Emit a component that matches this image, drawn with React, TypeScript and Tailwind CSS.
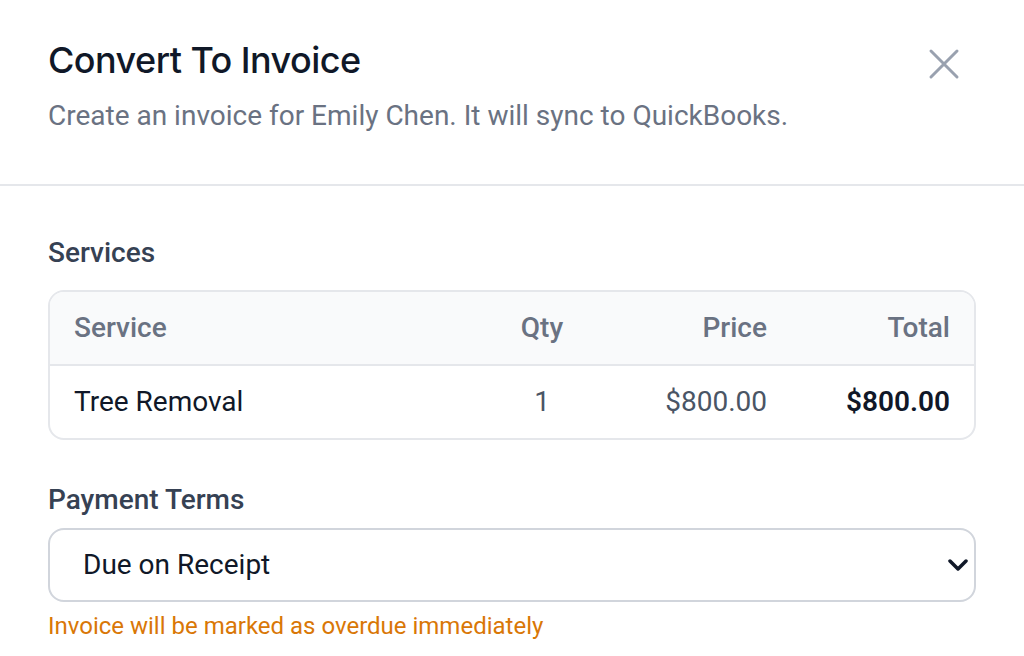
const rows = [{ service: "Tree Removal", qty: 1, price: "$800.00", total: "$800.00" }];

const CloseIcon = () => (
	<svg width="32" height="32" viewBox="0 0 32 32" fill="none" className="text-gray-400">
		<path d="M3 3L29 29M29 3L3 29" stroke="currentColor" strokeWidth="3" strokeLinecap="round" />
	</svg>
);

const Chevron = () => (
	<svg width="20" height="12" viewBox="0 0 20 12" fill="none" className="text-gray-900">
		<path d="M2 2L10 10L18 2" stroke="currentColor" strokeWidth="3.5" strokeLinecap="round" strokeLinejoin="round" />
	</svg>
);

export default function App() {
	return (
		<div className="w-[1024px] h-[656px] overflow-hidden bg-white font-['Roboto',sans-serif]">
			{/* header */}
			<div className="flex items-start justify-between pl-12 pr-[64px] pt-8 pb-12 border-b-2 border-gray-200">
				<div>
					<h2 className="font-['Inter',sans-serif] text-[36px] leading-[56px] font-medium text-gray-900 tracking-[-0.55px]">
						Convert To Invoice
					</h2>
					<p className="mt-2 text-[28px] leading-[40px] text-gray-500">
						Create an invoice for Emily Chen. It will sync to QuickBooks.
					</p>
				</div>
				<button className="mt-[16px]">
					<CloseIcon />
				</button>
			</div>

			{/* body */}
			<div className="px-12 pt-12">
				<div className="-mt-px mb-px text-[28px] leading-[40px] font-medium text-gray-700">Services</div>
				<div className="mt-[17px] rounded-2xl border-2 border-gray-200 overflow-hidden">
					<div className="grid grid-cols-[1fr_138px_180px_183px] bg-gray-50 border-b-2 border-gray-200 text-[28px] leading-[40px] font-medium text-gray-500">
						<div className="px-6 py-4">Service</div>
						<div className="py-4 text-center">Qty</div>
						<div className="px-6 py-4 text-right">Price</div>
						<div className="px-6 py-4 text-right">Total</div>
					</div>
					{rows.map((r) => (
						<div key={r.service} className="grid grid-cols-[1fr_138px_180px_183px] text-[28px] leading-[40px]">
							<div className="px-6 py-4 text-gray-900">{r.service}</div>
							<div className="py-4 text-center text-gray-600">{r.qty}</div>
							<div className="px-6 py-4 text-right text-gray-600">{r.price}</div>
							<div className="px-6 py-4 text-right font-semibold text-gray-900">{r.total}</div>
						</div>
					))}
				</div>

				<div className="mt-10 text-[28px] leading-[40px] font-medium text-gray-700">Payment Terms</div>
				<div className="mt-2 flex items-center justify-between h-[74px] rounded-2xl border-2 border-gray-300 pl-[33px] pr-[6px]">
					<span className="text-[28px] leading-[40px] text-gray-900">Due on Receipt</span>
					<Chevron />
				</div>
				<p className="mt-2 text-[24px] leading-[32px] text-[#d97706]">
					Invoice will be marked as overdue immediately
				</p>
			</div>
		</div>
	);
}
